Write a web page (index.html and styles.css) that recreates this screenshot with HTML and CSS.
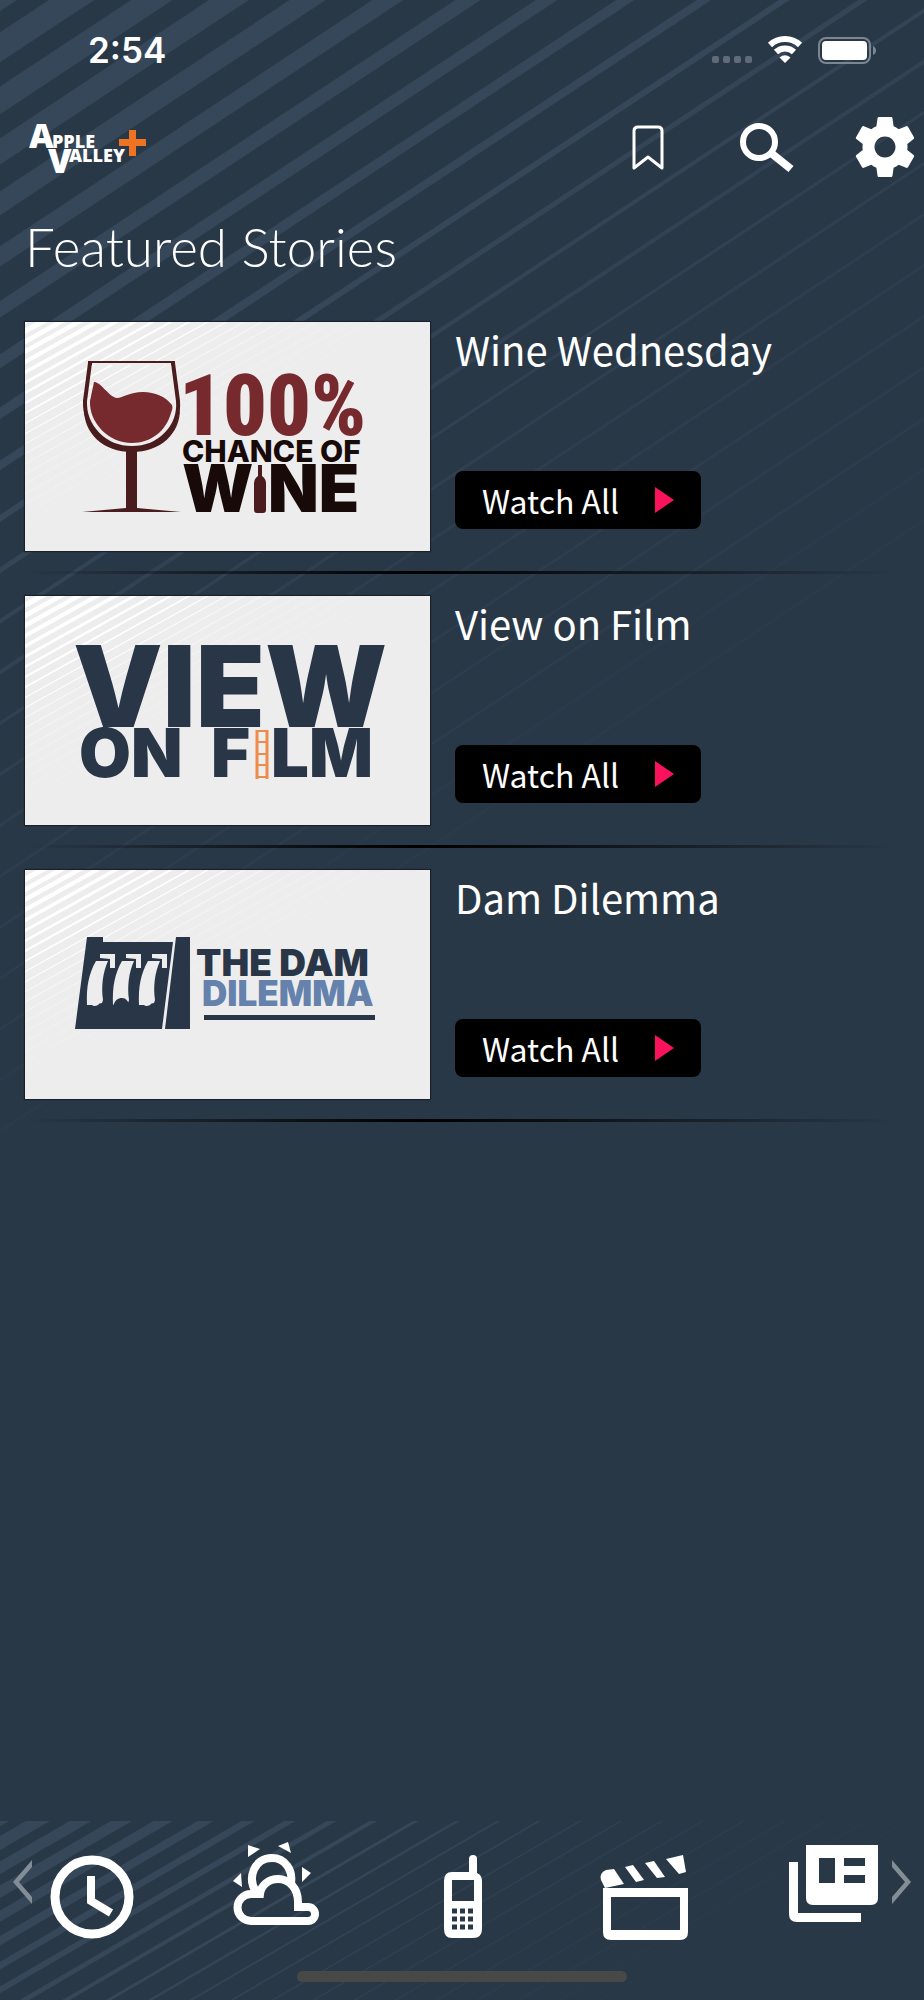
FILE: index.html
```
<!DOCTYPE html>
<html lang="en">
<head>
  <meta charset="utf-8">
  <meta name="viewport" content="width=device-width, initial-scale=1">
  <title>Apple Valley+</title>
  <link rel="stylesheet" href="styles.css">
</head>
<body>
  <!-- shared stripe artwork -->
  <svg class="defs" aria-hidden="true">
    <defs>
      <g id="stripes" fill="none" stroke="currentColor">
        <path stroke-width="25" d="M-60 36L1940-1286" />
        <path stroke-width="25" d="M-60 87L1940-1235" />
        <path stroke-width="23" d="M-60 140L1940-1182" />
        <path stroke-width="22" d="M-60 191L1940-1131" />
        <path stroke-width="20" d="M-60 243L1940-1079" />
        <path stroke-width="17" d="M-60 296L1940-1026" />
        <path stroke-width="14" d="M-60 349L1940-973" />
        <path stroke-width="12" d="M-60 401L1940-921" />
        <path stroke-width="10" d="M-60 453L1940-869" />
        <path stroke-width="8" d="M-60 505L1940-817" />
        <path stroke-width="6" d="M-60 558L1940-764" />
        <path stroke-width="5" d="M-60 610L1940-712" opacity=".9" />
        <path stroke-width="4" d="M-60 661L1940-661" opacity=".8" />
        <path stroke-width="4" d="M-60 712L1940-610" opacity=".7" />
        <path stroke-width="3" d="M-60 763L1940-559" opacity=".65" />
        <path stroke-width="3" d="M-60 814L1940-508" opacity=".55" />
        <path stroke-width="3" d="M-60 865L1940-457" opacity=".45" />
        <path stroke-width="3" d="M-60 916L1940-406" opacity=".4" />
        <path stroke-width="3" d="M-60 967L1940-355" opacity=".35" />
        <path stroke-width="3" d="M-60 1018L1940-304" opacity=".3" />
        <path stroke-width="3" d="M-60 1069L1940-253" opacity=".25" />
        <path stroke-width="3" d="M-60 1120L1940-202" opacity=".2" />
        <path stroke-width="3" d="M-60 1171L1940-151" opacity=".15" />
      </g>
    </defs>
  </svg>

  <div class="app">
    <svg class="backdrop" viewBox="0 0 924 1200" aria-hidden="true"><use href="#stripes" /></svg>

    <div class="status">
      <span class="time">2:54</span>
      <svg width="166" height="28" viewBox="0 0 166 28" aria-hidden="true">
        <g fill="#5f6b78">
          <rect x="0" y="20" width="7" height="7" rx="2" />
          <rect x="11" y="20" width="7" height="7" rx="2" />
          <rect x="22" y="20" width="7" height="7" rx="2" />
          <rect x="33" y="20" width="7" height="7" rx="2" />
        </g>
        <g fill="none" stroke="#fff" stroke-width="6">
          <path d="M58 9a22 22 0 0 1 30 0" />
          <path d="M64 16a13 13 0 0 1 18 0" />
        </g>
        <path fill="#fff" d="M67.500 21.500q5.500-4.500 11 0L73 27z" />
        <rect x="107" y="2" width="51" height="25" rx="7" fill="none" stroke="#7c8692" stroke-width="2" />
        <rect x="110" y="5" width="45" height="19" rx="4" fill="#fff" />
        <path fill="#7c8692" d="M161 10q3 1.500 3 4.500t-3 4.500z" />
      </svg>
    </div>

    <header class="topbar">
      <a class="logo" href="#" aria-label="Apple Valley Plus">
        <svg width="120" height="74" viewBox="0 -8 120 74">
          <g fill="#fff">
            <text class="logo-big" x="1" y="30">A</text>
            <text class="logo-small" x="24" y="30">PPLE</text>
            <text class="logo-big" x="20" y="55">V</text>
            <text class="logo-small" x="41" y="44">ALLEY</text>
          </g>
          <path fill="#ee7423" d="M101 12h7v9h10v7h-10v10h-7V28H91v-7h10z" />
        </svg>
      </a>
      <nav class="tools">
        <button type="button" aria-label="Bookmarks">
          <svg width="72" height="72" viewBox="0 0 72 72">
            <path d="M21 57V20q0-4 4-4h20q4 0 4 4v37L35 46z" fill="none" stroke="#fff" stroke-width="3" stroke-linejoin="round" />
          </svg>
        </button>
        <button type="button" aria-label="Search">
          <svg width="72" height="72" viewBox="0 0 72 72" fill="none" stroke="#fff">
            <circle cx="28" cy="31" r="16" stroke-width="6" />
            <path d="M40 42l20 16" stroke-width="8" />
          </svg>
        </button>
        <button type="button" aria-label="Settings">
          <svg width="72" height="72" viewBox="0 0 24 24" fill="#fff">
            <path d="M19.430 12.980c.04-.32.07-.64.07-.98s-.03-.66-.07-.98l2.110-1.650c.19-.15.24-.42.12-.64l-2-3.460c-.12-.22-.39-.3-.61-.22l-2.490 1c-.52-.4-1.080-.73-1.690-.98l-.38-2.650C14.460 2.180 14.250 2 14 2h-4c-.25 0-.46.18-.49.42l-.38 2.650c-.61.25-1.170.59-1.690.98l-2.490-1c-.23-.09-.49 0-.61.22l-2 3.460c-.13.22-.07.49.12.64l2.110 1.650c-.04.32-.07.65-.07.98s.03.66.07.98l-2.110 1.650c-.19.15-.24.42-.12.64l2 3.460c.12.22.39.3.61.22l2.490-1c.52.4 1.080.73 1.690.98l.38 2.650c.03.24.24.42.49.42h4c.25 0 .46-.18.49-.42l.38-2.650c.61-.25 1.170-.59 1.690-.98l2.490 1c.23.09.49 0 .61-.22l2-3.460c.12-.22.07-.49-.12-.64l-2.110-1.650zM12 15.500c-1.930 0-3.500-1.570-3.500-3.500s1.570-3.500 3.500-3.500 3.500 1.570 3.500 3.500-1.570 3.500-3.500 3.500z" />
          </svg>
        </button>
      </nav>
    </header>

    <main>
      <h1>Featured Stories</h1>

      <article class="story">
        <svg class="thumb" viewBox="0 0 405 229" role="img" aria-label="100% Chance of Wine">
          <rect width="405" height="229" fill="#ededed" />
          <svg class="thumb-stripes" width="405" height="229" viewBox="0 0 1738 1168" preserveAspectRatio="none"><use href="#stripes" /></svg>
          <path d="M65 41h83l5 38c2 25-18 47-46 47S59 104 60 79z" fill="none" stroke="#4b1c1e" stroke-width="4" />
          <path d="M67 42h79" stroke="#ededed" stroke-width="2" />
          <path d="M63 40h87" stroke="#4b1c1e" stroke-width="2" />
          <path d="M59 85c2 24 21 41 48 41s46-17 48-41c1 27-20 45-48 45S58 112 59 85z" fill="#4b1c1e" />
          <path d="M69 60c6-1 15 15 23 16 6 0 12-6 26-6 12 0 23 5 29 13 1 3 0 5-1 8-5 18-20 30-39 30-24 0-43-21-42-42z" fill="#772a2d" />
          <path d="M101 128h11v58l44 4H57l44-4z" fill="#4b1c1e" />
          <text class="wine-hundred" x="154" y="113">100%</text>
          <g fill="#190a0a">
            <text class="wine-chance" x="157" y="140">CHANCE OF</text>
            <text class="wine-word" x="157" y="190">W</text>
            <text class="wine-word" x="243" y="190">NE</text>
          </g>
          <path d="M233 143h4v11q4 3 4 7v27q0 3-3 3h-6q-3 0-3-3v-27q0-4 4-7z" fill="#4b1c1e" />
        </svg>
        <div class="story-info">
          <h2>Wine Wednesday</h2>
          <button type="button" class="watch">Watch All <span class="play"></span></button>
        </div>
      </article>

      <article class="story">
        <svg class="thumb" viewBox="0 0 405 229" role="img" aria-label="View on Film">
          <rect width="405" height="229" fill="#ededed" />
          <svg class="thumb-stripes" width="405" height="229" viewBox="0 0 1738 1168" preserveAspectRatio="none"><use href="#stripes" /></svg>
          <g fill="#283648">
            <text class="film-view" x="48" y="131">VIEW</text>
            <text class="film-word" x="54" y="181">ON</text>
            <text class="film-word" x="186" y="181">F</text>
            <text class="film-word" x="246" y="181">LM</text>
          </g>
          <g fill="none" stroke="#ef8c4b">
            <path stroke-width="3" d="M232 134v49M242 134v49" />
            <path stroke-width="2" d="M232 135h10M232 146h10M232 158h10M232 169h10M232 181h10" />
          </g>
        </svg>
        <div class="story-info">
          <h2>View on Film</h2>
          <button type="button" class="watch">Watch All <span class="play"></span></button>
        </div>
      </article>

      <article class="story">
        <svg class="thumb" viewBox="0 0 405 229" role="img" aria-label="The Dam Dilemma">
          <rect width="405" height="229" fill="#ededed" />
          <svg class="thumb-stripes" width="405" height="229" viewBox="0 0 1738 1168" preserveAspectRatio="none"><use href="#stripes" /></svg>
          <path fill="#283648" d="M62 67h16v5h70l-11 87H50zM151 67h14v92h-25z" />
          <g id="gate" fill="#ededed">
            <path d="M71 91h12c-5 11-7 25-5 39l-1 3q-3 0-4 2-4 2-6 0l-5 0c-1-18 2-32 9-44z" />
            <path d="M75 84h15v14h-5V89l-10-1z" />
          </g>
          <use href="#gate" x="26" />
          <use href="#gate" x="52" />
          <path fill="#283648" d="M88 136c2-6 5-8 9-8s6 3 8 8z" />
          <text class="dam-title" x="171" y="106" fill="#283648">THE DAM</text>
          <text class="dam-text" x="177" y="136" fill="#6482ac">DILEMMA</text>
          <rect x="179" y="145" width="171" height="5" fill="#283648" />
        </svg>
        <div class="story-info">
          <h2>Dam Dilemma</h2>
          <button type="button" class="watch">Watch All <span class="play"></span></button>
        </div>
      </article>
    </main>

    <footer class="dock">
      <svg class="dock-stripes" viewBox="0 0 1743 383" preserveAspectRatio="none" aria-hidden="true"><use href="#stripes" /></svg>
      <nav class="dock-nav">
        <a href="#" aria-label="Recent">
          <svg width="100" height="104" viewBox="0 0 100 104" fill="none" stroke="#fff" stroke-width="9">
            <circle cx="50" cy="57" r="37" />
            <path d="M49 36v25l20 12" stroke-width="8" />
          </svg>
        </a>
        <a href="#" aria-label="Weather">
          <svg width="100" height="104" viewBox="0 0 100 104">
            <g fill="none" stroke="#fff" stroke-width="8">
              <path d="M29 52C20 38 27 18 45 18c13 0 21 12 19 25" />
              <path d="M24 81a13 13 0 0 1 0-27h9c1-9 9-15 18-15 11 0 20 9 20 23v5h10a7 7 0 0 1 0 14z" />
            </g>
            <path fill="#fff" d="M21 5l12 4-12 8zM51 6l10-4 3 11zM75 27l9 6-9 9zM6 41l8-8 1 14z" />
          </svg>
        </a>
        <a href="#" aria-label="Call">
          <svg width="100" height="104" viewBox="0 0 100 104">
            <path fill="#fff" fill-rule="evenodd" d="M40 32h17V19q0-4 4-4t4 4v14q5 2 5 8v48q0 9-9 9H40q-8 0-8-9V41q0-9 8-9zM40 40v21h22V40z" />
            <path stroke="#293847" stroke-width="5" stroke-dasharray="5 3" d="M40 71h22M40 79h22M40 87h22" />
          </svg>
        </a>
        <a href="#" aria-label="Videos">
          <svg width="100" height="104" viewBox="0 0 100 104" fill="#fff">
            <path fill-rule="evenodd" d="M6 48h85v44q0 8-8 8H14q-8 0-8-8zM14 57v33h69V57z" />
            <path d="M8 48l-4-8q-2-7 5-10l8-1 10 15zM28 27l8-2 11 15-8 2zM48 23l9-2 11 16-8 1zM69 19l17-4 3 17-7 2z" />
          </svg>
        </a>
        <a href="#" aria-label="News">
          <svg width="100" height="104" viewBox="0 0 100 104" fill="#fff">
            <path fill-rule="evenodd" d="M24 5h72v53q0 7-7 7H31q-7 0-7-7zM37 18v25h16V18zM62 18v8h21v-8zM62 35v8h21v-8z" />
            <path d="M7 22h9v51h63v9H15q-8 0-8-8z" />
          </svg>
        </a>
      </nav>
      <button type="button" class="arrow arrow-left" aria-label="Previous">
        <svg width="20" height="44" viewBox="0 0 20 44"><path d="M19 0v7L6 22l13 15v7L0 22z" fill="#838d96" /></svg>
      </button>
      <button type="button" class="arrow arrow-right" aria-label="Next">
        <svg width="20" height="44" viewBox="0 0 20 44"><path d="M1 0v7l13 15L1 37v7l19-22z" fill="#838d96" /></svg>
      </button>
      <div class="home-bar"></div>
    </footer>
  </div>
</body>
</html>
```
FILE: styles.css
```
* {
  box-sizing: border-box;
}
body {
  margin: 0;
  background-color: #293847;
  color: white;
  font-family: "Noto Sans CJK SC", "Noto Sans", sans-serif;
}
button {
  padding: 0;
  border: 0;
  background: none;
  color: inherit;
  font: inherit;
  cursor: pointer;
}
svg {
  display: block;
}
.defs {
  position: absolute;
  width: 0;
  height: 0;
}
.app {
  position: relative;
  display: flex;
  flex-direction: column;
  min-height: 100vh;
  overflow: hidden;
}
.backdrop {
  position: absolute;
  top: 0;
  left: 0;
  z-index: -1;
  width: 100%;
  color: #36475a;
}

/* status bar */
.status {
  display: flex;
  justify-content: space-between;
  align-items: center;
  height: 100px;
  padding: 0 46px 0 88px;
}
.time {
  font: 600 35px/40px Inter, sans-serif;
}

/* header */
.topbar {
  display: flex;
  justify-content: space-between;
  align-items: center;
  height: 94px;
  padding: 0 3px 0 28px;
}
.tools {
  display: flex;
  gap: 46px;
}
.logo-big,
.logo-small {
  font-family: "Open Sans", sans-serif;
  font-weight: 800;
  font-size: 34px;
}
.logo-small {
  font-size: 18px;
}

/* stories */
main {
  padding: 0 25px;
}
h1 {
  margin: 16px 0 38px;
  font: 300 53px/74px Lato, sans-serif;
}
.story {
  display: flex;
  gap: 25px;
  padding-bottom: 20px;
  margin-bottom: 22px;
  border-bottom: 3px solid;
  border-image: linear-gradient(to right, transparent, black 45%, transparent) 1;
}
.thumb {
  flex: none;
  width: 405px;
  max-width: 50%;
  box-shadow: 0 0 1px 1px #18202a;
}
.thumb-stripes {
  color: white;
}
.story-info {
  display: flex;
  flex-direction: column;
  justify-content: space-between;
  align-items: flex-start;
  padding-bottom: 22px;
}
h2 {
  margin: 0;
  font-size: 40px;
  font-weight: 400;
  line-height: 54px;
}
.watch {
  display: flex;
  align-items: center;
  justify-content: space-between;
  width: 246px;
  height: 58px;
  padding: 0 27px;
  border-radius: 8px;
  background-color: black;
  font-size: 32px;
}
.play {
  border-left: 19px solid #f9125c;
  border-top: 13px solid transparent;
  border-bottom: 13px solid transparent;
}

/* thumbnail lettering */
.wine-hundred {
  fill: #772a2d;
  font: 900 86px "Roboto Condensed", Roboto, sans-serif;
}
.wine-chance,
.wine-word,
.film-view,
.film-word,
.dam-title,
.dam-text {
  font-family: Inter, sans-serif;
  font-weight: 900;
}
.wine-chance {
  font-size: 30px;
  font-weight: 800;
}
.wine-word {
  font-size: 66px;
}
.film-view {
  font-size: 113px;
}
.film-word {
  font-size: 67px;
}
.dam-title {
  font-size: 37px;
}
.dam-text {
  font-size: 35px;
}

/* bottom dock */
.dock {
  position: relative;
  height: 179px;
  margin-top: auto;
  padding-top: 19px;
}
.dock-stripes {
  position: absolute;
  top: 0;
  left: 0;
  z-index: -1;
  width: 100%;
  height: 100%;
  color: #36475a;
}
.dock-nav {
  display: grid;
  grid-template-columns: repeat(5, 1fr);
  justify-items: center;
}
.arrow {
  position: absolute;
  top: 39px;
}
.arrow-left {
  left: 13px;
}
.arrow-right {
  right: 13px;
}
.home-bar {
  width: 330px;
  height: 11px;
  margin: 27px auto 0;
  border-radius: 6px;
  background-color: #484848;
}
```
